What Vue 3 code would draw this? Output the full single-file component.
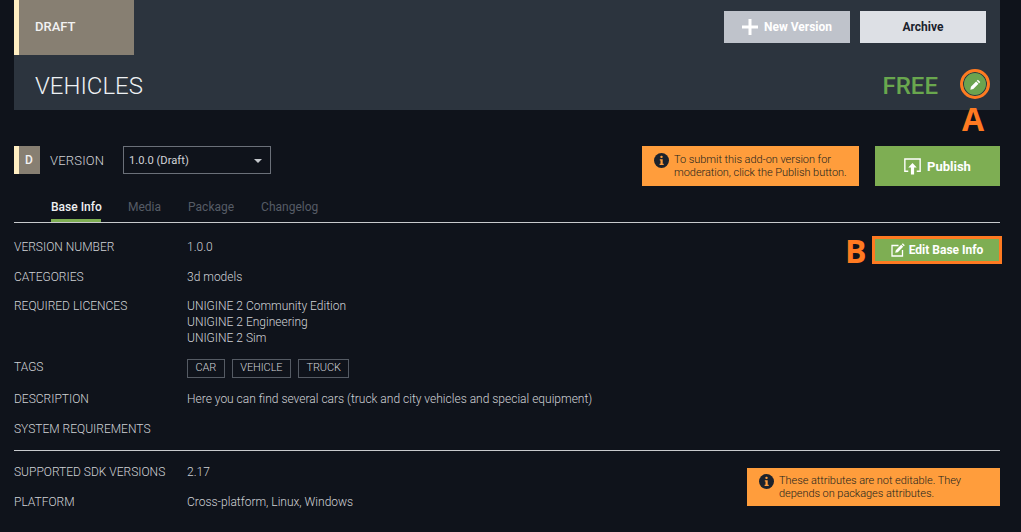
<template>
  <div class="page">
    <header class="hero">
      <div class="hero-top">
        <div class="draft">DRAFT</div>
        <div class="hero-actions">
          <button class="btn-new">
            <svg width="16" height="16" viewBox="0 0 16 16"><path d="M6.5 0h3v6.5H16v3H9.500V16h-3V9.500H0v-3h6.500z" fill="#fff"/></svg>
            New Version
          </button>
          <button class="btn-archive">Archive</button>
        </div>
      </div>
      <div class="hero-bottom">
        <h1>VEHICLES</h1>
        <div class="price">FREE</div>
        <span class="round-edit">
          <svg width="11" height="11" viewBox="0 0 12 12"><path d="M8.600.8l2.600 2.600-1.200 1.200-2.600-2.600zM6.700 2.700l2.600 2.600L3.600 11 .4 11.600 1 8.400z" fill="#fff"/></svg>
        </span>
        <span class="mark mark-a">A</span>
      </div>
    </header>

    <div class="version-bar">
      <div class="d-badge">D</div>
      <span class="version-label">VERSION</span>
      <div class="select">
        <span>1.0.0 (Draft)</span>
        <i class="caret"></i>
      </div>
      <div class="notice notice-top">
        <svg class="info" width="15" height="15" viewBox="0 0 15 15"><circle cx="7.500" cy="7.500" r="7.500" fill="#1b222c"/><rect x="6.300" y="2.700" width="2.400" height="2.400" rx="1" fill="#ff9d3c"/><path d="M5.800 6.300h2.900v4.500h1v1.200H5.600v-1.200h.9V7.500h-.7z" fill="#ff9d3c"/></svg>
        <p>To submit this add-on version for moderation, click the Publish button.</p>
      </div>
      <button class="btn-publish">
        <svg width="17" height="17" viewBox="0 0 16 16" fill="none"><path d="M4 12.500H.8V1h14.400v11.500H12" stroke="#fff" stroke-width="1.300"/><path d="M8 4.800l4 4.200H9.500v6.500h-3V9H4z" fill="#fff"/></svg>
        Publish
      </button>
    </div>

    <nav class="tabs">
      <a class="tab active">Base Info</a>
      <a class="tab">Media</a>
      <a class="tab">Package</a>
      <a class="tab">Changelog</a>
    </nav>

    <section class="info-section first">
      <dl class="rows">
        <div class="row"><dt>VERSION NUMBER</dt><dd>1.0.0</dd></div>
        <div class="row"><dt>CATEGORIES</dt><dd>3d models</dd></div>
        <div class="row tight"><dt>REQUIRED LICENCES</dt><dd>UNIGINE 2 Community Edition<br>UNIGINE 2 Engineering<br>UNIGINE 2 Sim</dd></div>
        <div class="row tight"><dt>TAGS</dt><dd class="tags"><span>CAR</span><span>VEHICLE</span><span>TRUCK</span></dd></div>
        <div class="row tight"><dt>DESCRIPTION</dt><dd>Here you can find several cars (truck and city vehicles and special equipment)</dd></div>
        <div class="row"><dt>SYSTEM REQUIREMENTS</dt><dd></dd></div>
      </dl>
      <div class="edit-wrap">
        <span class="mark mark-b">B</span>
        <button class="btn-edit">
          <svg width="14" height="14" viewBox="0 0 14 14" fill="none"><path d="M7.500 2.500H1v10.500h10.500V7" stroke="#fff" stroke-width="1.300"/><path d="M11.800.2l2 2-1 1-2-2zM10.200 1.800l2 2-5.400 5.400-2.600.6.600-2.600z" fill="#fff"/></svg>
          Edit Base Info
        </button>
      </div>
    </section>

    <section class="info-section second">
      <dl class="rows">
        <div class="row"><dt>SUPPORTED SDK VERSIONS</dt><dd>2.17</dd></div>
        <div class="row"><dt>PLATFORM</dt><dd>Cross-platform, Linux, Windows</dd></div>
      </dl>
      <div class="notice notice-bottom">
        <svg class="info" width="15" height="15" viewBox="0 0 15 15"><circle cx="7.500" cy="7.500" r="7.500" fill="#1b222c"/><rect x="6.300" y="2.700" width="2.400" height="2.400" rx="1" fill="#ff9d3c"/><path d="M5.800 6.300h2.900v4.500h1v1.200H5.600v-1.200h.9V7.500h-.7z" fill="#ff9d3c"/></svg>
        <p>These attributes are not editable. They depends on packages attributes.</p>
      </div>
    </section>
  </div>
</template>

<script setup>
</script>

<style>
html, body { margin: 0; background: #0f131b; }
</style>

<style scoped>
.page {
  box-sizing: border-box;
  width: 1021px;
  height: 532px;
  overflow: hidden;
  padding: 0 21px 0 14px;
  background: #0f131b;
  color: #cfd2d6;
  font: 300 12px/16px Roboto, sans-serif;
}
button { font-family: inherit; border: 0; padding: 0; }
.hero { height: 110px; background: #2c343e; display: flex; flex-direction: column; }
.hero-top { display: flex; justify-content: space-between; height: 55px; padding-right: 14px; }
.draft {
  box-sizing: border-box;
  width: 120px;
  height: 55px;
  padding: 19px 0 0 16px;
  background: #877f72;
  border-left: 5px solid #ffeec2;
  color: #f2f2f2;
  font-weight: 500;
  font-size: 13px;
}
.hero-actions { display: flex; gap: 10px; padding-top: 11px; }
.hero-actions button {
  width: 126px;
  height: 32px;
  font-size: 12px;
  font-weight: 700;
  display: flex;
  align-items: center;
  justify-content: center;
}
.btn-new { background: #bfc3cb; color: #fff; gap: 6px; }
.btn-archive { background: #dde0e5; color: #1b222c; }
.hero-bottom { position: relative; flex: 1; display: flex; align-items: center; padding: 7px 11px 0 21px; }
h1 { margin: 0; flex: 1; font-size: 24px; line-height: 28px; font-weight: 300; color: #eef1f4; }
.price { font-size: 24px; line-height: 28px; font-weight: 500; color: #69a74e; margin-right: 22px; }
.round-edit {
  box-sizing: border-box;
  width: 30px;
  height: 30px;
  margin: -4px -1px 0 0;
  border-radius: 50%;
  background: #6ba34f;
  border: 3px solid #ff7a21;
  box-shadow: inset 0 0 0 1px #2c343e;
  display: flex;
  align-items: center;
  justify-content: center;
}
.mark { position: absolute; color: #ff7a21; font-family: "Open Sans", sans-serif; font-weight: 700; font-size: 32px; line-height: 32px; }
.mark-a { right: 16px; top: 48px; }
.version-bar { display: flex; align-items: flex-start; margin-top: 36px; height: 40px; }
.d-badge {
  box-sizing: border-box;
  width: 26px;
  height: 28px;
  background: #877f72;
  border-left: 5px solid #ffeec2;
  color: #f2f2f2;
  font-weight: 500;
  line-height: 29px;
  padding-left: 6px;
}
.version-label { width: 73px; margin-left: 10px; line-height: 29px; font-size: 13px; letter-spacing: 0.2px; font-weight: 300; }
.select {
  box-sizing: border-box;
  width: 148px;
  height: 28px;
  border: 1px solid #6b7079;
  display: flex;
  align-items: center;
  justify-content: space-between;
  padding: 1px 8px 0 5px;
  font-weight: 400;
  font-size: 11.200px;
}
.caret { width: 0; height: 0; border: 4px solid transparent; border-top: 4px solid #c4c7cc; border-bottom: 0; }
.notice { box-sizing: border-box; background: #ff9d3c; display: flex; align-items: flex-start; }
.notice .info { flex: none; }
.notice p { margin: 0; line-height: 13px; font-size: 11px; font-weight: 300; color: #221f1c; letter-spacing: -0.05px; }
.notice-top { width: 217px; height: 40px; margin-left: auto; padding: 7px 0 0 12px; gap: 5px; }
.notice-bottom { width: 253px; height: 38px; padding: 6px 0 0 12px; gap: 5px; margin-top: 4px; }
.btn-publish {
  width: 125px;
  height: 40px;
  margin-left: 16px;
  background: #7eae53;
  color: #fff;
  font-size: 13px;
  font-weight: 700;
  display: flex;
  align-items: center;
  justify-content: center;
  gap: 6px;
}
.tabs { display: flex; gap: 27px; padding-left: 37px; margin-top: 10px; height: 26px; border-bottom: 1px solid #c8cacd; }
.tab { box-sizing: border-box; height: 26px; line-height: 22px; color: #565c66; font-weight: 400; white-space: nowrap; }
.tab.active { color: #eef0f2; font-weight: 500; border-bottom: 3px solid #7eae53; width: 50px; }
.info-section { display: flex; justify-content: space-between; align-items: flex-start; }
.first { padding: 16px 0 13px; border-bottom: 1px solid #c8cacd; }
.second { padding-top: 13px; }
.rows { margin: 0; display: flex; flex-direction: column; gap: 14px; }
.row { display: flex; }
.tight { margin-top: -1px; }
dt { width: 173px; }
dd { margin: 0; }
.tags { display: flex; gap: 7px; }
.tags span {
  box-sizing: border-box;
  height: 19px;
  line-height: 16px;
  padding: 0 7.500px;
  border: 1px solid #555b64;
  font-size: 11px;
  letter-spacing: -0.1px;
}
.edit-wrap { position: relative; }
.btn-edit {
  width: 124px;
  height: 22px;
  background: #7eae53;
  color: #fff;
  font-size: 12px;
  font-weight: 700;
  display: flex;
  align-items: center;
  justify-content: center;
  gap: 4px;
  outline: 3px solid #ff7a21;
  margin-right: 1px;
}
.mark-b { left: -30px; top: -4px; }
</style>
